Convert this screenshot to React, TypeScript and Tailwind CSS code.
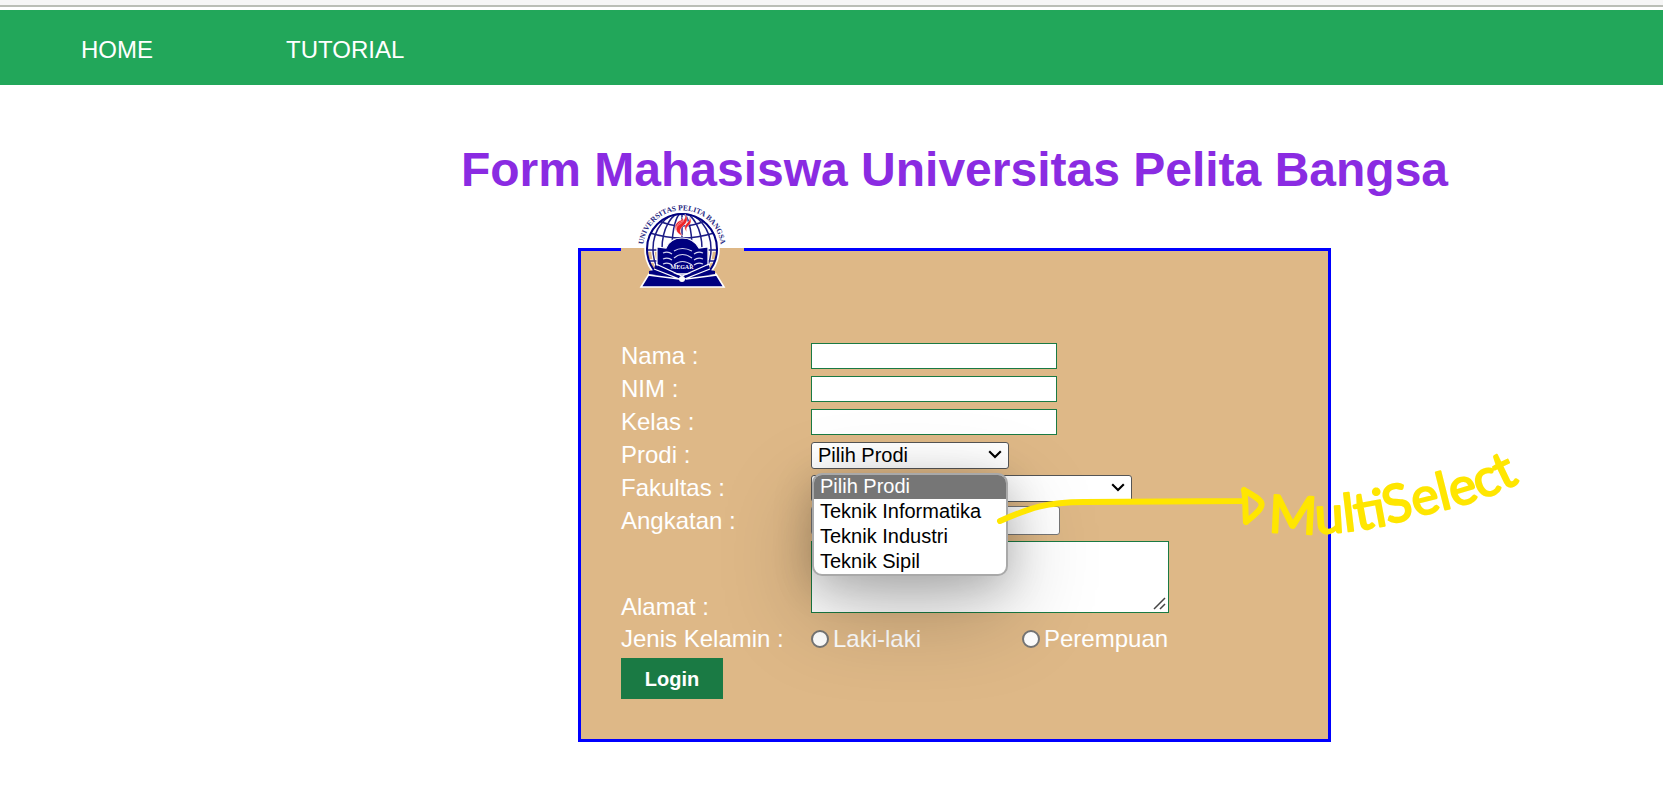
import type { ReactNode } from "react";

const prodiOptions = ["Pilih Prodi", "Teknik Informatika", "Teknik Industri", "Teknik Sipil"];

function Chevron() {
  return (
    <svg className="pointer-events-none absolute top-[10px] right-[7px]" width="14" height="9" viewBox="0 0 14 9" aria-hidden="true">
      <path d="M1.2 1.2 7 7l5.800-5.800" fill="none" stroke="#000" strokeWidth="2.100" />
    </svg>
  );
}

function Row({ id, label, children }: { id: string; label: string; children: ReactNode }) {
  return (
    <div className="flex h-[33px] items-center">
      <label htmlFor={id} className="w-[190px] shrink-0">
        {label} :
      </label>
      {children}
    </div>
  );
}

function Logo() {
  return (
    <svg width="123" height="91" viewBox="0 0 123 91" role="img" aria-label="Universitas Pelita Bangsa">
      <defs>
        <path id="seal-arc" d="M23 54A39 39 0 1 1 99 54" />
        <clipPath id="globe-clip">
          <circle cx="61" cy="45" r="36" />
        </clipPath>
      </defs>
      <text fill="#26267f" fontFamily="Liberation Serif, serif" fontWeight="700" fontSize="7.500">
        <textPath href="#seal-arc" startOffset="50%" textAnchor="middle">
          UNIVERSITAS PELITA BANGSA
        </textPath>
      </text>
      <circle cx="61" cy="45" r="36" fill="none" stroke="#fff" strokeWidth="3.500" />
      <g fill="none" stroke="#fff" strokeWidth="3.500" clipPath="url(#globe-clip)">
        <ellipse cx="61" cy="45" rx="29" ry="36" />
        <path d="M25 46h72M28 57h66" />
      </g>
      <g fill="none" stroke="#1c1c85" strokeWidth="1.500" clipPath="url(#globe-clip)">
        <ellipse cx="61" cy="45" rx="29" ry="36" />
        <ellipse cx="61" cy="45" rx="20" ry="36" />
        <ellipse cx="61" cy="45" rx="10" ry="36" />
        <path d="M61 9v30M38 17q23 10 46 0M29 29q32 10 64 0M25 46h72M28 57h66" />
      </g>
      <circle cx="61" cy="45" r="35" fill="none" stroke="#00007f" strokeWidth="2" />
      <path
        d="M62 32c-8-3-9-9-4-13 5-3 7-4 6-9 4 5 2 9-2 12-4 4-3 7 0 10Z M66 28c-4-4-2-7 1-10 2-2 2-4 1-6 4 6 1 8-1 10-2 2-2 4-1 6Z M55 27c-2-5 0-8 3-10 3-1 4-2 3-4 3 4 1 5-2 7-3 1-4 4-4 7Z"
        fill="#ee2329"
        stroke="#fff"
        strokeWidth=".4"
      />
      <path d="M36 43l9 1c3-7 9-10 16-10s13 3 17 10l9-1v22l-26 9-25-9Z" fill="#00007f" stroke="#fff" strokeWidth="1.200" />
      <g fill="none" stroke="#d6d6f0" strokeWidth="1.200">
        <path d="M53 47q8-5 18 0M53 54q8-7 18 0M53 61q8-7 18 0" />
        <path d="M42 49q5-2 9 1M42 55q5-2 9 1M42 60q5-2 9 1" />
        <path d="M82 49q-5-2-9 1M82 55q-5-2-9 1M82 60q-5-2-9 1" />
      </g>
      <text x="61" y="65" textAnchor="middle" fill="#fff" fontFamily="Liberation Serif, serif" fontWeight="700" fontSize="6">
        MEGAR
      </text>
      <path d="M28 70h67l8 13H20Z" fill="#00007f" stroke="#fff" strokeWidth="1.600" />
      <path d="M28 70v-3l5-1 1-5 27 12 27-12 1 5 5 1v3l-20 3H50Z" fill="#00007f" />
      <path d="M35 60 61 72l27-12M33 65l28 11 28-11M27 71l31 4M96 71l-31 4" fill="none" stroke="#fff" strokeWidth="1.300" />
      <circle cx="61" cy="75" r="3" fill="#fff" />
    </svg>
  );
}

function Annotation() {
  return (
    <svg className="pointer-events-none absolute top-[236px] left-[402px] z-20 overflow-visible" width="550" height="110" viewBox="0 0 550 110">
      <path
        d="M20 81C50 68 66 62 104 62L262 61M264 50c2 10 1 20 2 32M264 50c20 12 26 13 2 32"
        fill="none"
        stroke="#ffe600"
        strokeWidth="6"
        strokeLinecap="round"
        strokeLinejoin="round"
      />
      <path id="note-line" d="M288 91C335 97 385 92 425 80S500 66 555 34" fill="none" />
      <text fill="#ffe600" stroke="#ffe600" strokeWidth="2" strokeLinejoin="round" fontFamily="Lato, sans-serif" fontSize="52">
        <textPath href="#note-line">MultiSelect</textPath>
      </text>
    </svg>
  );
}

export default function App() {
  const textInput = "h-[26px] w-[246px] border border-[#1a7a44] bg-white px-1 text-xl text-black";
  const select = "h-[27px] w-full appearance-none rounded-[3px] border border-[#555] bg-white pl-[6px] text-xl leading-6 text-black";
  const radio = "size-[18px] appearance-none rounded-full border-2 border-[#767676] bg-white";

  return (
    <div className="min-h-screen bg-white font-['Liberation_Sans',Arial,sans-serif]">
      <div className="mb-[3px] h-[7px] border-b-2 border-[#babeb6] bg-[#f6f6f6]" />
      <nav className="flex h-[75px] items-center gap-[133px] bg-[#22a75a] pt-1 pl-[81px] text-2xl text-white">
        <a href="#home">HOME</a>
        <a href="#tutorial">TUTORIAL</a>
      </nav>

      <main className="flex flex-col items-center pt-[57px] pb-10 pl-[246px]">
        <h1 className="text-5xl leading-[56px] font-bold text-[#8a2be2]">Form Mahasiswa Universitas Pelita Bangsa</h1>

        <form className="relative mt-[6px] w-full max-w-[753px]" onSubmit={(e) => e.preventDefault()}>
          <fieldset className="border-[3px] border-[#00f] bg-[#deb887] px-[40px] pt-[44px] pb-[40px] text-2xl leading-[27px] text-white">
            <legend>
              <Logo />
            </legend>

            <Row id="nama" label="Nama">
              <input id="nama" type="text" className={textInput} />
            </Row>
            <Row id="nim" label="NIM">
              <input id="nim" type="text" className={textInput} />
            </Row>
            <Row id="kelas" label="Kelas">
              <input id="kelas" type="text" className={textInput} />
            </Row>
            <Row id="prodi" label="Prodi">
              <div className="relative w-[198px]">
                <select id="prodi" className={select}>
                  {prodiOptions.map((o) => (
                    <option key={o}>{o}</option>
                  ))}
                </select>
                <Chevron />
                <ul
                  role="listbox"
                  aria-label="Prodi"
                  className="absolute top-[33px] left-px z-10 w-[196px] overflow-hidden rounded-[10px] border-2 border-[#a9a9a9] bg-white text-xl leading-[23px] text-black shadow-[0_32px_90px_rgba(0,0,0,0.25),0_8px_40px_rgba(0,0,0,0.2)]"
                >
                  {prodiOptions.map((o, i) => (
                    <li
                      key={o}
                      role="option"
                      aria-selected={i === 0}
                      className={i === 0 ? "h-[24px] bg-[#767676] pl-[6px] text-white" : "h-[25px] pt-px pl-[6px]"}
                    >
                      {o}
                    </li>
                  ))}
                </ul>
              </div>
            </Row>
            <Row id="fakultas" label="Fakultas">
              <div className="relative w-[321px]">
                <select id="fakultas" className={select} />
                <Chevron />
              </div>
            </Row>
            <Row id="angkatan" label="Angkatan">
              <input id="angkatan" type="text" className="h-[29px] w-[249px] rounded-[3px] border border-[#767676] bg-white px-1 text-xl text-black" />
            </Row>

            <div className="flex h-[85px] items-end">
              <label htmlFor="alamat" className="w-[190px] shrink-0 pb-[2px]">
                Alamat :
              </label>
              <div className="relative h-[81px] w-[358px]">
                <textarea id="alamat" className="block h-[72px] w-full resize-none border border-[#1a7a44] bg-white p-1 text-xl text-black" />
                <svg className="pointer-events-none absolute top-[56px] right-[3px]" width="13" height="13" viewBox="0 0 13 13" aria-hidden="true">
                  <path d="M1 12 12 1M7 12l5-5" fill="none" stroke="#444" strokeWidth="1.500" />
                </svg>
              </div>
            </div>

            <div role="radiogroup" aria-label="Jenis Kelamin" className="flex h-[33px] items-center">
              <span className="w-[190px] shrink-0">Jenis Kelamin :</span>
              <label className="flex w-[211px] items-center gap-1">
                <input type="radio" name="jk" className={radio} />
                Laki-laki
              </label>
              <label className="flex items-center gap-1">
                <input type="radio" name="jk" className={radio} />
                Perempuan
              </label>
            </div>

            <button type="submit" className="mt-[3px] block h-[41px] w-[102px] bg-[#1a7a44] text-xl font-bold text-white">
              Login
            </button>
          </fieldset>
          <Annotation />
        </form>
      </main>
    </div>
  );
}
